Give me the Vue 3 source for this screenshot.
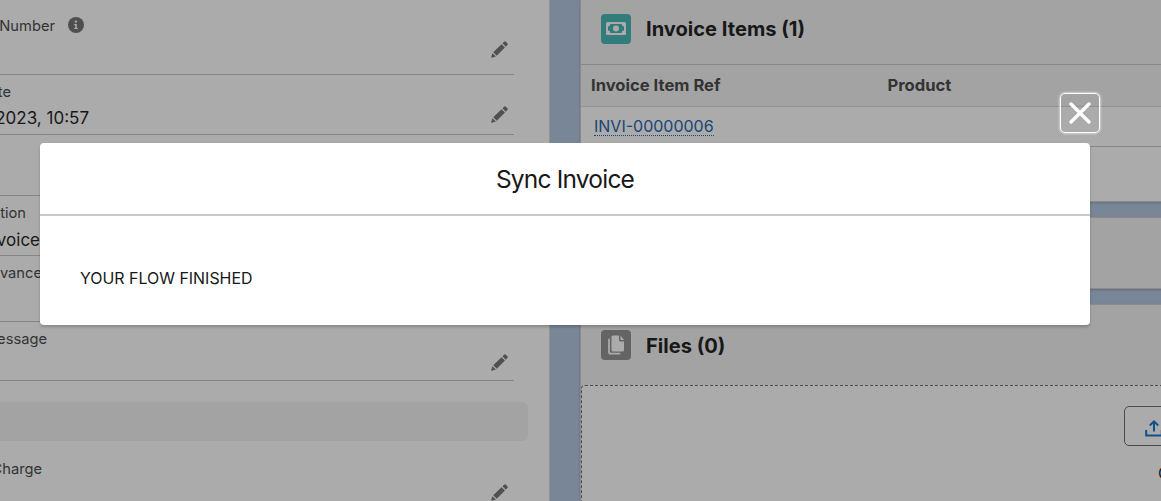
<template>
  <div class="page">
    <main class="record">
      <div v-for="(field, i) in fields" :key="i" class="field" :style="{ height: field.height + 'px' }">
        <div v-if="field.label" class="label">
          <span class="clip" :style="{ width: field.labelEnd + 'px' }">{{ field.label }}</span>
          <svg v-if="field.info" class="info" viewBox="0 0 16 16">
            <circle cx="8" cy="8" r="8" fill="#4f4f4f" />
            <circle cx="7.9" cy="4.6" r="1.2" fill="#ababab" />
            <path d="M6.2 7h2.6v4h1v1H6.2v-1h1V8h-1z" fill="#ababab" />
          </svg>
        </div>
        <div v-if="field.value" class="value">
          <span class="clip" :style="{ width: field.valueEnd + 'px' }">{{ field.value }}</span>
        </div>
        <svg v-if="field.editable" class="pencil" viewBox="0 0 16 16">
          <path d="M.2 15.4 1.3 11.5 4.6 14.7.7 15.8Q0 16 .2 15.4z" />
          <path d="M2.1 10.7 9.9 3.1 13.1 6.2 5.4 13.9z" />
          <path d="M10.8 2.2 12.4.7Q13.2 0 14 .7L15.4 2.2Q16.1 3 15.4 3.8L13.9 5.3z" />
        </svg>
      </div>
      <div class="section"></div>
      <div class="field last">
        <div class="label"><span class="clip charge">Charge</span></div>
        <svg class="pencil" viewBox="0 0 16 16">
          <path d="M.2 15.4 1.3 11.5 4.6 14.7.7 15.8Q0 16 .2 15.4z" />
          <path d="M2.1 10.7 9.9 3.1 13.1 6.2 5.4 13.9z" />
          <path d="M10.8 2.2 12.4.7Q13.2 0 14 .7L15.4 2.2Q16.1 3 15.4 3.8L13.9 5.3z" />
        </svg>
      </div>
    </main>

    <aside class="related">
      <section class="card items">
        <header class="card-head">
          <svg class="icon" viewBox="0 0 30 30">
            <rect width="30" height="30" rx="4" fill="#327d7b" />
            <rect x="5" y="8" width="20" height="13" rx="1.5" fill="#ababab" />
            <path d="M9.4 10h11.2a2.4 2.4 0 0 0 2.4 2.4v4.2a2.4 2.4 0 0 0-2.4 2.4H9.4A2.4 2.4 0 0 0 7 16.6v-4.2A2.4 2.4 0 0 0 9.4 10z" fill="#327d7b" />
            <circle cx="15" cy="14.5" r="3" fill="#ababab" />
          </svg>
          <h2>Invoice Items (1)</h2>
        </header>
        <div class="cols">
          <span class="ref">Invoice Item Ref</span>
          <span>Product</span>
        </div>
        <div class="row"><a>INVI-00000006</a></div>
      </section>
      <section class="card empty"></section>
      <section class="card files">
        <header class="card-head">
          <svg class="icon" viewBox="0 0 30 30">
            <rect width="30" height="30" rx="4" fill="#646464" />
            <path d="M8 9.5v12.5Q8 23.7 9.7 23.7H18.5" fill="none" stroke="#ababab" stroke-width="1.8" stroke-linecap="round" />
            <path d="M12 5.5h6V10Q18 11.500 19.500 11.500H23V20Q23 21.500 21.500 21.500H12Q10.500 21.500 10.500 20V7Q10.500 5.500 12 5.500z" fill="#ababab" />
            <path d="M19.5 5.5v3.7q0 .8.8.8H23z" fill="#ababab" />
          </svg>
          <h2>Files (0)</h2>
        </header>
        <div class="drop">
          <button class="upload">
            <svg viewBox="0 0 18 18">
              <path d="M1.2 11v5.5h15.6V11M9 12.5V2.5M4.8 6.5 9 2.3l4.2 4.2" />
            </svg>
          </button>
          <span class="hint">Or drop files</span>
        </div>
      </section>
    </aside>

    <div class="modal">
      <button class="close">
        <svg viewBox="0 0 22 22"><path d="M2 2 20 20M20 2 2 20" /></svg>
      </button>
      <header class="modal-head"><h1>Sync Invoice</h1></header>
      <div class="modal-body"><span>YOUR FLOW FINISHED</span></div>
    </div>
  </div>
</template>

<script setup>
// heights include the rule under each field
const fields = [
  { height: 75, label: "Number", labelEnd: 55, info: true, editable: true },
  { height: 60, label: "te", labelEnd: 11, value: "2023, 10:57", valueEnd: 89, editable: true },
  { height: 61 },
  { height: 60, label: "tion", labelEnd: 26, value: "voice", valueEnd: 40 },
  { height: 66, label: "vance", labelEnd: 42 },
  { height: 59, label: "essage", labelEnd: 47, editable: true },
];
</script>

<style>
body {
  overflow: hidden;
}
</style>

<style scoped>
* {
  box-sizing: border-box;
}
.page {
  position: relative;
  display: flex;
  gap: 30px;
  width: 1161px;
  height: 501px;
  overflow: hidden;
  background: #798697;
  color: #181818;
  font-family: Inter, "Liberation Sans", sans-serif;
}
.record {
  flex: none;
  width: 550px;
  height: 501px;
  overflow: hidden;
  background: #ababab;
  border-right: 1px solid #929292;
}
.field {
  position: relative;
  width: 514px;
  padding-top: 7px;
  border-bottom: 1px solid #858585;
}
.field:first-child {
  padding-top: 16px;
}
.label {
  display: flex;
  align-items: center;
  gap: 12.5px;
  height: 20px;
  font-size: 14.7px;
  color: #333;
}
.value {
  height: 24px;
  margin-top: 4px;
  font-size: 17px;
  line-height: 24px;
}
.field:nth-child(4) .value {
  margin-top: 5px;
}
.clip {
  display: flex;
  justify-content: flex-end;
  white-space: nowrap;
}
.charge {
  width: 42px;
}
.info {
  width: 16px;
  height: 16px;
  margin-top: -2px;
}
.pencil {
  position: absolute;
  right: 6px;
  bottom: 16px;
  width: 17px;
  height: 17px;
  fill: #505050;
}
.field:nth-child(2) .pencil {
  bottom: 11px;
}
.field:nth-child(6) .pencil {
  bottom: 9px;
}
.section {
  width: 528px;
  height: 39px;
  margin-top: 21px;
  border-radius: 0 6px 6px 0;
  background: #a3a3a3;
}
.last {
  height: 70px;
  padding-top: 18px;
}
.last .pencil {
  bottom: 9px;
}
.related {
  flex: 1;
  display: flex;
  flex-direction: column;
  gap: 15px;
}
.card {
  flex: none;
  border: 1px solid #8b8b8b;
  border-right: 0;
  background: #a3a3a3;
  box-shadow: 0 1px 2px rgba(0, 0, 0, 0.2);
}
.card-head {
  display: flex;
  align-items: center;
  gap: 15px;
  padding-left: 20px;
}
.icon {
  width: 30px;
  height: 30px;
}
h2 {
  margin: 0;
  font-size: 20.1px;
  line-height: 24px;
  font-weight: 700;
}
.items {
  height: 202px;
  border-top: 0;
  background: #ababab;
}
.items .card-head {
  height: 65px;
  padding-bottom: 6px;
  border-bottom: 1px solid #868686;
  background: #a3a3a3;
}
.cols {
  display: flex;
  height: 42px;
  padding-left: 10px;
  border-bottom: 1px solid #929292;
  background: #a3a3a3;
  color: #333;
  font-size: 16.6px;
  line-height: 41px;
  font-weight: 700;
}
.ref {
  width: 296.5px;
}
.row {
  height: 40px;
  padding: 10px 0 0 13px;
  border-bottom: 1px solid #858585;
  font-size: 16px;
  line-height: 18px;
}
.row a {
  display: inline-block;
  color: #174575;
  border-bottom: 1px dotted #174575;
}
.empty {
  height: 72px;
}
.files {
  height: 210px;
}
.files .card-head {
  height: 80px;
}
.files h2 {
  padding-top: 2px;
}
.drop {
  display: flex;
  flex-direction: column;
  gap: 17px;
  height: 140px;
  padding: 20px 0 0 542px;
  border: 1px dashed #4c4c4c;
  border-radius: 4px;
  background: #ababab;
}
.upload {
  flex: none;
  display: flex;
  align-items: center;
  width: 150px;
  height: 40px;
  padding: 3px 0 0 20px;
  border: 1px solid #4c4c4c;
  border-radius: 5px;
  background: none;
}
.upload svg {
  flex: none;
  width: 18px;
  height: 18px;
  fill: none;
  stroke: #124f91;
  stroke-width: 2;
}
.hint {
  padding-left: 34px;
  font-size: 16px;
  white-space: nowrap;
}
.modal {
  position: absolute;
  top: 143px;
  left: 40px;
  width: 1050px;
  height: 182px;
  border-radius: 4px;
  background: #fff;
  box-shadow: 0 2px 3px rgba(0, 0, 0, 0.2);
}
.modal-head {
  height: 73px;
  border-bottom: 2px solid #c9c9c9;
  text-align: center;
}
h1 {
  margin: 0;
  font-size: 24.5px;
  line-height: 73px;
  font-weight: 400;
  letter-spacing: -0.8px;
}
.modal-body {
  padding: 53px 40px 0;
  font-size: 15.95px;
  line-height: 20px;
}
.close {
  position: absolute;
  top: -50px;
  right: -10px;
  display: flex;
  align-items: center;
  justify-content: center;
  width: 40px;
  height: 40px;
  padding: 0;
  border: 1px solid #fff;
  border-radius: 5px;
  background: none;
  box-shadow: 0 0 3px #fff;
}
.close svg {
  width: 22px;
  height: 22px;
  fill: none;
  stroke: #fff;
  stroke-width: 3.3;
  stroke-linecap: round;
}
</style>
